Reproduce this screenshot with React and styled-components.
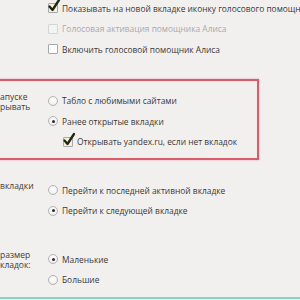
import React from "react";
import styled, { createGlobalStyle } from "styled-components";

const Global = createGlobalStyle`
  html, body { margin: 0; padding: 0; background: #f2f0ef; overflow: hidden; }
  body { font-family: "Open Sans", "Noto Sans", sans-serif; }
`;

const Page = styled.div`
  width: 300px;
  height: 300px;
  display: flex;
  flex-direction: column;
  overflow: hidden;
`;

const Content = styled.div`
  flex: 1;
  overflow: hidden;
`;

const Footer = styled.div`
  height: 1px;
  border-top: 2px solid #86d2c4;
  background: #e6f4f1;
`;

const Section = styled.div`
  display: grid;
  grid-template-columns: 48px 1fr;
  margin-top: ${(p) => p.$mt}px;
  ${(p) =>
    p.$highlight &&
    `
    margin-left: -12px;
    margin-right: 41px;
    border: 2px solid #d95c6a;
    box-shadow: 0 0 2px rgba(210, 70, 90, 0.45), inset 0 0 1px rgba(210, 70, 90, 0.3);
    padding: 9.5px 0 6px 10px;
  `}
`;

const Label = styled.div`
  font-size: 8.5px;
  line-height: 10.5px;
  padding-top: 1px;
  color: #3c3c3c;
  white-space: nowrap;
  overflow: hidden;
`;

const Options = styled.div`
  display: flex;
  flex-direction: column;
`;

const Row = styled.div`
  height: 20.5px;
  display: flex;
  align-items: center;
  gap: 4px;
  padding-left: ${(p) => (p.$indent ? 15 : 0)}px;
  font-size: 8.4px;
  color: ${(p) => (p.$disabled ? "#a9a9a9" : "#383838")};
  white-space: nowrap;
`;

const Box = styled.span`
  position: relative;
  flex: none;
  width: 8px;
  height: 8px;
  border: 1px solid ${(p) => (p.$disabled ? "#d4d4d4" : "#a8a8a8")};
  background: ${(p) => (p.$checked ? "#f6f2dc" : p.$disabled ? "#f4f4f4" : "#fdfdfd")};
  border-radius: 1px;
`;

const Tick = styled.svg`
  position: absolute;
  left: -1px;
  top: -5px;
  width: 12px;
  height: 13px;
  overflow: visible;
`;

const Radio = styled.span`
  flex: none;
  width: 8px;
  height: 8px;
  border: 1px solid #b4b4b4;
  border-radius: 50%;
  background: radial-gradient(circle at 50% 40%, #ffffff 0%, #f2f2f2 60%, #dcdcdc 100%);
  display: flex;
  align-items: center;
  justify-content: center;
  &::after {
    content: "";
    width: 3px;
    height: 3px;
    border-radius: 50%;
    background: ${(p) => (p.$checked ? "#2a2a2a" : "transparent")};
  }
`;

const Checkbox = ({ checked, disabled }) => (
  <Box $checked={checked} $disabled={disabled}>
    {checked && (
      <Tick viewBox="0 0 12 13">
        <path d="M1.5 7.5 L4.5 11 L11 1" fill="none" stroke="#1e2614" strokeWidth="2.3" strokeLinejoin="round" strokeLinecap="round" />
      </Tick>
    )}
  </Box>
);

export default function App() {
  return (
    <>
      <Global />
      <Page>
        <Content>
          <Section $mt={-2}>
            <Label />
            <Options>
              <Row>
                <Checkbox checked />
                Показывать на новой вкладке иконку голосового помощника Алиса
              </Row>
              <Row $disabled>
                <Checkbox disabled />
                Голосовая активация помощника Алиса
              </Row>
              <Row>
                <Checkbox />
                Включить голосовой помощник Алиса
              </Row>
            </Options>
          </Section>

          <Section $highlight $mt={19.5}>
            <Label>
              апуске
              <br />
              рывать
            </Label>
            <Options>
              <Row>
                <Radio />
                Табло с любимыми сайтами
              </Row>
              <Row>
                <Radio $checked />
                Ранее открытые вкладки
              </Row>
              <Row $indent>
                <Checkbox checked />
                Открывать yandex.ru, если нет вкладок
              </Row>
            </Options>
          </Section>

          <Section $mt={19.75}>
            <Label>вкладки</Label>
            <Options>
              <Row>
                <Radio />
                Перейти к последней активной вкладке
              </Row>
              <Row>
                <Radio $checked />
                Перейти к следующей вкладке
              </Row>
            </Options>
          </Section>

          <Section $mt={28}>
            <Label>
              размер
              <br />
              кладок:
            </Label>
            <Options>
              <Row>
                <Radio $checked />
                Маленькие
              </Row>
              <Row>
                <Radio />
                Большие
              </Row>
            </Options>
          </Section>
        </Content>
        <Footer />
      </Page>
    </>
  );
}
